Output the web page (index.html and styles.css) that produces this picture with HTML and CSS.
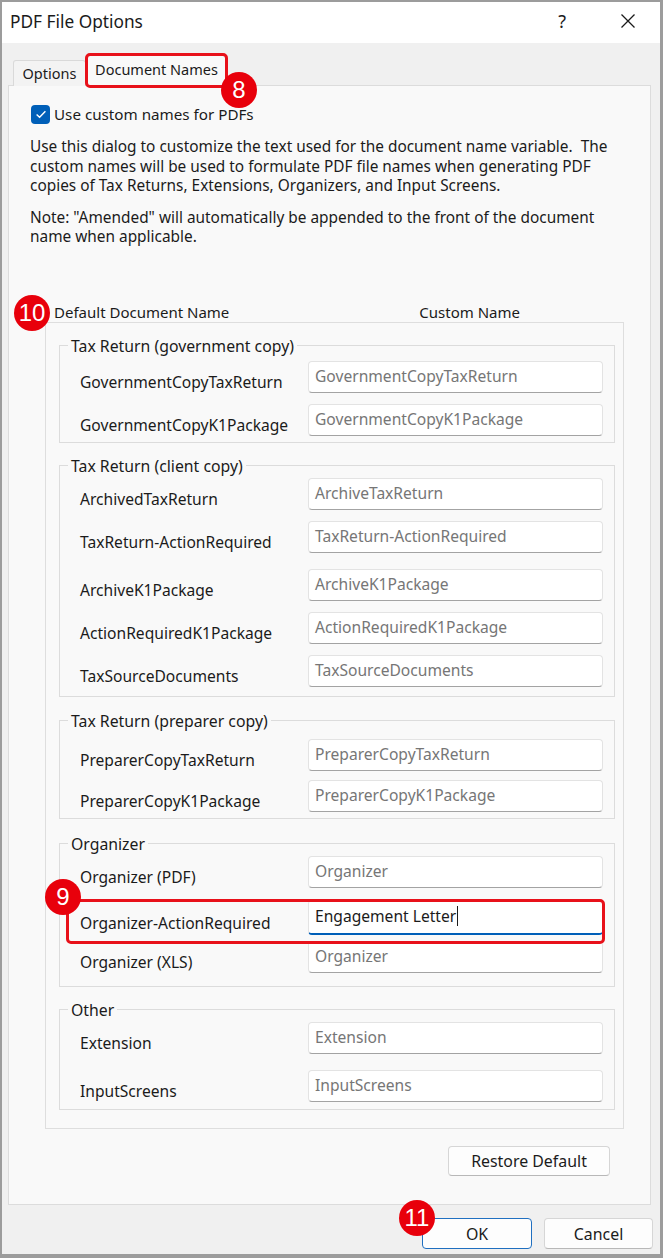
FILE: index.html
```html
<!DOCTYPE html>
<html lang="en">
<head>
<meta charset="utf-8">
<title>PDF File Options</title>
<link rel="stylesheet" href="styles.css">
</head>
<body>
<div class="window">
  <div class="titlebar">
    <span class="title">PDF File Options</span>
    <span class="help">?</span>
    <svg class="close" width="16" height="16" viewBox="0 0 16 16"><path d="M1.5 1.5 L14.5 14.5 M14.5 1.5 L1.5 14.5" stroke="#1a1a1a" stroke-width="1.3" fill="none"/></svg>
  </div>
  <div class="client">
    <div class="tabs">
      <div class="tab">Options</div>
      <div class="tab active">Document Names<span class="hl hl-tab"></span><span class="badge b8">8</span></div>
    </div>
    <div class="panel">
      <div class="check">
        <span class="box"><svg width="18" height="18" viewBox="0 0 18 18"><path d="M4.6 9.4 L7.6 12.3 L13.4 6.3" stroke="#fff" stroke-width="1.4" fill="none"/></svg></span>
        <span>Use custom names for PDFs</span>
      </div>
      <p class="desc">Use this dialog to customize the text used for the document name variable.&nbsp; The<br>custom names will be used to formulate PDF file names when generating PDF<br>copies of Tax Returns, Extensions, Organizers, and Input Screens.</p>
      <p class="desc note">Note: "Amended" will automatically be appended to the front of the document<br>name when applicable.</p>
      <div class="cols">
        <span class="badge b10">10</span>
        <span class="col-default">Default Document Name</span>
        <span class="col-custom">Custom Name</span>
      </div>
      <div class="outer">
        <fieldset class="grp g1">
          <legend>Tax Return (government copy)</legend>
          <div class="row"><span class="lbl">GovernmentCopyTaxReturn</span><span class="field">GovernmentCopyTaxReturn</span></div>
          <div class="row"><span class="lbl">GovernmentCopyK1Package</span><span class="field">GovernmentCopyK1Package</span></div>
        </fieldset>
        <fieldset class="grp g2">
          <legend>Tax Return (client copy)</legend>
          <div class="row"><span class="lbl">ArchivedTaxReturn</span><span class="field">ArchiveTaxReturn</span></div>
          <div class="row"><span class="lbl">TaxReturn-ActionRequired</span><span class="field">TaxReturn-ActionRequired</span></div>
          <div class="row wide"><span class="lbl">ArchiveK1Package</span><span class="field">ArchiveK1Package</span></div>
          <div class="row"><span class="lbl">ActionRequiredK1Package</span><span class="field">ActionRequiredK1Package</span></div>
          <div class="row"><span class="lbl">TaxSourceDocuments</span><span class="field">TaxSourceDocuments</span></div>
        </fieldset>
        <fieldset class="grp g3">
          <legend>Tax Return (preparer copy)</legend>
          <div class="row"><span class="lbl">PreparerCopyTaxReturn</span><span class="field">PreparerCopyTaxReturn</span></div>
          <div class="row tight"><span class="lbl">PreparerCopyK1Package</span><span class="field">PreparerCopyK1Package</span></div>
        </fieldset>
        <fieldset class="grp g4">
          <legend>Organizer</legend>
          <div class="row"><span class="lbl">Organizer (PDF)</span><span class="field">Organizer</span></div>
          <div class="row current">
            <span class="lbl">Organizer-ActionRequired</span>
            <span class="field active">Engagement Letter<span class="caret"></span></span>
            <span class="hl hl-row"></span>
            <span class="badge b9">9</span>
          </div>
          <div class="row after-current"><span class="lbl">Organizer (XLS)</span><span class="field">Organizer</span></div>
        </fieldset>
        <fieldset class="grp g5">
          <legend>Other</legend>
          <div class="row"><span class="lbl">Extension</span><span class="field">Extension</span></div>
          <div class="row wide"><span class="lbl">InputScreens</span><span class="field">InputScreens</span></div>
        </fieldset>
      </div>
      <div class="restore-row"><button class="btn restore">Restore Default</button></div>
    </div>
    <div class="footer">
      <button class="btn ok">OK<span class="badge b11">11</span></button>
      <button class="btn cancel">Cancel</button>
    </div>
  </div>
</div>
</body>
</html>
```
FILE: styles.css
```css
* { box-sizing: border-box; }
html, body { margin: 0; padding: 0; }
body {
  width: 663px;
  height: 1258px;
  font-family: "Noto Sans", "Open Sans", sans-serif;
  font-size: 15px;
  color: #1b1b1b;
  background: #9c9c9c;
}
.window {
  width: 663px;
  height: 1258px;
  border: 2px solid #9c9c9c;
  border-right-width: 3px;
  border-bottom-width: 4px;
  background: #f0f0f0;
  display: flex;
  flex-direction: column;
}
.titlebar {
  flex: none;
  height: 41px;
  background: #fff;
  display: flex;
  align-items: center;
  padding-left: 8px;
}
.title { flex: 1; font-size: 17.3px; padding-bottom: 2px; }
.help { font-size: 18px; margin-right: 54px; padding-bottom: 4px; }
.close { margin-right: 24px; margin-bottom: 4px; }

.client {
  flex: 1;
  display: flex;
  flex-direction: column;
  padding: 13px 7px 5px 6px;
}
.tabs {
  flex: none;
  display: flex;
  align-items: flex-end;
  height: 30px;
  position: relative;
  z-index: 2;
  font-size: 14.5px;
}
.tab {
  height: 26px;
  line-height: 24px;
  padding: 0 4px;
  margin-left: 5px;
  width: 73px;
  text-align: center;
  border: 1px solid #d9d9d9;
  border-bottom: none;
  background: #f3f3f3;
  border-radius: 3px 3px 0 0;
}
.tab.active {
  position: relative;
  height: 31px;
  width: 139px;
  margin-left: 1px;
  line-height: 26px;
  background: #f9f9f9;
}
.panel {
  flex: 1;
  margin-top: -1px;
  margin-right: 2px;
  border: 1px solid #dcdcdc;
  background: #f9f9f9;
  padding: 18px 0 0 0;
  display: flex;
  flex-direction: column;
}
.check {
  display: flex;
  align-items: center;
  gap: 4px;
  margin-left: 22px;
  height: 20px;
  font-size: 15.2px;
}
.box {
  width: 19px;
  height: 19px;
  border-radius: 4px;
  background: #005fb8;
  display: flex;
  align-items: center;
  justify-content: center;
}
.desc {
  margin: 13px 0 0 21px;
  line-height: 19.5px;
  font-size: 15.4px;
  white-space: nowrap;
}
.desc.note { margin-top: 12px; }
.cols {
  position: relative;
  margin: 55px 0 0 45px;
  height: 20px;
  line-height: 20px;
  display: flex;
}
.col-custom { margin-left: auto; margin-right: 130px; }

.outer {
  margin-left: 36px;
  width: 579px;
  border: 1px solid #dedede;
  padding: 13px 8px 18px 13px;
  display: flex;
  flex-direction: column;
}
.grp {
  margin: 0;
  min-width: 0;
  border: 1px solid #dcdcdc;
  padding: 2px 11px 7px 20px;
  font-size: 15.6px;
}
.grp legend {
  padding: 0 3px;
  margin-left: -12px;
  line-height: 20px;
  font-size: 15.8px;
}
.g1 { padding-top: 5px; padding-bottom: 6px; }
.g2 { margin-top: 13px; padding-bottom: 9px; }
.g3 { margin-top: 14px; padding-top: 8px; padding-bottom: 6px; }
.g4 { margin-top: 15px; padding-bottom: 13px; }
.g5 { margin-top: 13px; }

.row {
  position: relative;
  display: grid;
  grid-template-columns: 1fr 295px;
  height: 32px;
}
.row + .row { margin-top: 11px; }
.row.wide { margin-top: 16px; }
.row.tight { margin-top: 9px; }
.row.current { margin-top: 12px; height: 35px; }
.row.after-current { margin-top: 6px; }
.lbl {
  padding-top: 11px;
  line-height: 20px;
  white-space: nowrap;
}
.row.current .lbl { padding-top: 13px; }
.field {
  position: relative;
  height: 100%;
  background: #fff;
  border: 1px solid #e3e3e3;
  border-bottom-color: #a3a3a3;
  border-radius: 4px;
  padding-left: 6px;
  line-height: 28px;
  color: #767676;
  white-space: nowrap;
  z-index: 1;
}
.field.active {
  color: #1b1b1b;
  border-bottom: 2px solid #005fb8;
  line-height: 30px;
}
.caret {
  display: inline-block;
  width: 1px;
  height: 20px;
  background: #1b1b1b;
  vertical-align: -4px;
  margin-left: 1px;
}

.restore-row {
  display: flex;
  justify-content: flex-end;
  margin: 17px 40px 0 0;
}
.btn {
  font: inherit;
  font-size: 15.9px;
  color: #1b1b1b;
  background: #fdfdfd;
  border: 1px solid #d6d6d6;
  border-bottom-color: #b8b8b8;
  border-radius: 4px;
  height: 30px;
  padding: 0;
}
.restore { width: 162px; }
.footer {
  flex: none;
  display: flex;
  justify-content: flex-end;
  gap: 12px;
  margin-top: 13px;
}
.ok {
  position: relative;
  width: 110px;
  height: 31px;
  border: 1.5px solid #1f6fc0;
}
.cancel { width: 109px; height: 31px; }

.hl {
  position: absolute;
  border: 3px solid #e8111a;
  border-radius: 5px;
  pointer-events: none;
}
.hl-tab { left: -3px; top: -3px; width: 143px; height: 35px; }
.hl-row { left: -14px; top: -1px; width: 539px; height: 45px; z-index: 2; }

.badge {
  position: absolute;
  width: 36px;
  height: 36px;
  border-radius: 50%;
  background: #e8000b;
  color: #fff;
  font-family: "Liberation Sans", Arial, sans-serif;
  font-size: 24px;
  line-height: 36px;
  text-align: center;
  z-index: 3;
}
.b8 { left: 133px; top: 16px; }
.b9 { left: -35px; top: -21px; }
.b10 { left: -40px; top: -7px; }
.b11 { left: -24px; top: -19px; }
```
